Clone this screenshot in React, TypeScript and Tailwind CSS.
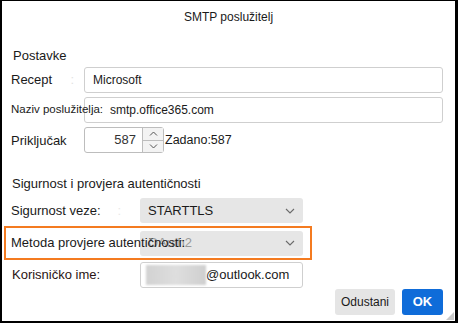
import React from "react";

function Chevron() {
  return (
    <svg width="10" height="6" viewBox="0 0 10 6" className="shrink-0">
      <path d="M1 1 L5 5 L9 1" fill="none" stroke="#6b6b6b" strokeWidth="1.1" />
    </svg>
  );
}

function Select({ value, faded }: { value: string; faded?: boolean }) {
  return (
    <div className="w-[163px] h-[25px] rounded-[3px] bg-[#e6e6e6] flex items-center pl-[8px] pr-[8px] justify-between">
      <span className={faded ? "text-[13px] text-[#9a9a9a]" : "text-[13px] text-[#1a1a1a]"}>{value}</span>
      <Chevron />
    </div>
  );
}

export default function App() {
  return (
    <div
      className="w-[458px] h-[323px] bg-white border-black border-l-2 border-t border-r-[3px] border-b-2 relative flex flex-col text-[#1a1a1a]"
      style={{ fontFamily: '"Liberation Sans", Arial, sans-serif' }}
    >
      <div className="h-[31px] flex items-center justify-center text-[12px]">SMTP poslužitelj</div>

      <div className="pl-[9px] pr-[12px] flex flex-col">
        <div className="mt-[16px] h-[16px] leading-[16px] text-[13px] pl-[2px]">Postavke</div>

        {/* Recept */}
        <div className="mt-[3px] h-[26px] flex items-center">
          <div className="w-[73px] flex items-center text-[13px]">
            <span>Recept</span>
            <span className="ml-auto mr-[10px] text-[#e2e2e2]">:</span>
          </div>
          <div className="flex-1 h-[26px] rounded-[3px] border border-[#cfcfcf] flex items-center pl-[8px] text-[12px]">
            Microsoft
          </div>
        </div>

        {/* Naziv */}
        <div className="mt-[4px] h-[26px] flex items-center">
          <div className="w-[73px] text-[11.5px] whitespace-nowrap relative z-10">Naziv poslužitelja:</div>
          <div className="flex-1 h-[26px] rounded-[3px] border border-[#cfcfcf] flex items-center pl-[25px] text-[12px]">
            smtp.office365.com
          </div>
        </div>

        {/* Priključak */}
        <div className="mt-[4px] h-[26px] flex items-center">
          <div className="w-[73px] text-[13px] pt-[2px]">Priključak</div>
          <div className="w-[80px] h-[26px] rounded-[3px] border border-[#bdbdbd] flex">
            <div className="flex-1 flex items-center justify-end pr-[6px] text-[13px] text-[#333]">587</div>
            <div className="w-[21px] flex flex-col border-l border-[#bdbdbd] bg-[#f3f3f3]">
              <div className="flex-1 flex items-center justify-center border-b border-[#bdbdbd]">
                <svg width="9" height="5" viewBox="0 0 9 5">
                  <path d="M1 4.5 L4.5 1 L8 4.5" fill="none" stroke="#555" strokeWidth="1" />
                </svg>
              </div>
              <div className="flex-1 flex items-center justify-center">
                <svg width="9" height="5" viewBox="0 0 9 5">
                  <path d="M1 0.5 L4.5 4 L8 0.5" fill="none" stroke="#555" strokeWidth="1" />
                </svg>
              </div>
            </div>
          </div>
          <div className="ml-[1px] text-[12.5px]">Zadano:587</div>
        </div>

        <div className="mt-[23px] h-[16px] leading-[16px] text-[13px] pl-[1px]">Sigurnost i provjera autentičnosti</div>

        {/* Sigurnost veze */}
        <div className="mt-[6px] h-[25px] flex items-center">
          <div className="w-[129px] flex items-center text-[13px]">
            <span>Sigurnost veze:</span>
            <span className="ml-auto mr-[19px] text-[#e8e8e8]">:</span>
          </div>
          <Select value="STARTTLS" />
        </div>

        {/* Metoda */}
        <div className="mt-[3px] ml-[-7px] w-[308px] h-[34px] border-2 border-[#f47b20] flex items-center pl-[5px]">
          <div className="w-[129px] text-[13px] whitespace-nowrap relative z-10">Metoda provjere autentičnosti:</div>
          <Select value="OAuth2" faded />
        </div>

        {/* Korisničko ime */}
        <div className="mt-[2px] h-[26px] flex items-center">
          <div className="w-[129px] text-[13px] pl-[1px] text-[#2a1414]">Korisničko ime:</div>
          <div className="w-[163px] h-[26px] rounded-[3px] border border-[#cfcfcf] flex items-center pl-[5px] text-[13px]">
            <div className="w-[60px] h-[20px] bg-gradient-to-r from-[#d2d2d2] via-[#dedede] to-[#cfcfcf] blur-[1px]" />
            <span>@outlook.com</span>
          </div>
        </div>

        {/* Buttons */}
        <div className="mt-[1px] h-[26px] flex justify-end gap-[7px]">
          <div className="w-[60px] h-[26px] rounded-[3px] bg-[#e5e5e5] flex items-center justify-center text-[12px]">
            Odustani
          </div>
          <div className="w-[41px] h-[26px] rounded-[3px] bg-[#0f6cd9] flex items-center justify-center text-[13px] font-bold text-white">
            OK
          </div>
        </div>
      </div>

      <svg className="absolute right-[1px] bottom-[1px]" width="8" height="8" viewBox="0 0 8 8">
        <path d="M8 0 L8 8 L0 8 Z" fill="#c8c8c8" />
      </svg>
    </div>
  );
}
